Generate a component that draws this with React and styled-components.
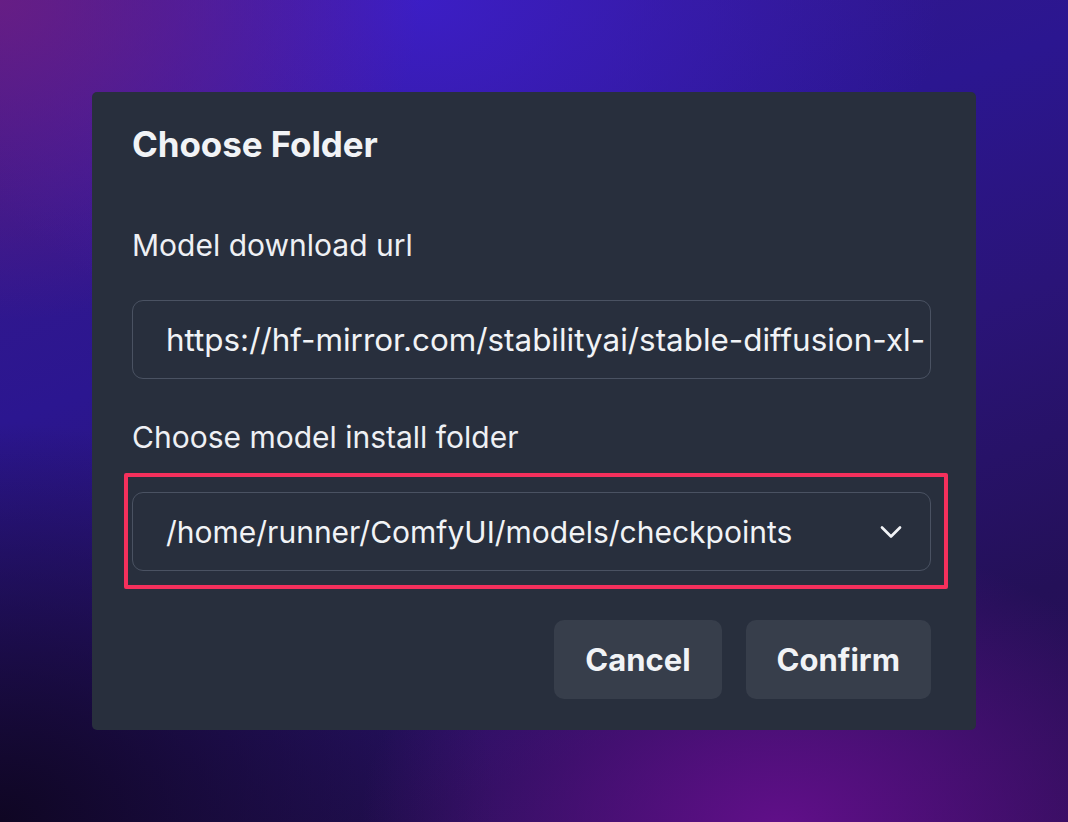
import React from "react";
import styled, { createGlobalStyle } from "styled-components";

const GlobalStyle = createGlobalStyle`
  html, body {
    margin: 0;
    padding: 0;
    width: 1068px;
    height: 822px;
    overflow: hidden;
  }
  body {
    font-family: Inter, "Liberation Sans", sans-serif;
    -webkit-font-smoothing: antialiased;
  }
`;

const Backdrop = styled.div`
  width: 1068px;
  height: 822px;
  box-sizing: border-box;
  padding: 92px 92px;
  background:
    radial-gradient(ellipse 420px 320px at 0px 0px, rgba(110, 30, 130, 0.85), rgba(110, 30, 130, 0) 100%),
    radial-gradient(ellipse 520px 360px at 420px 0px, rgba(60, 30, 200, 0.95), rgba(60, 30, 200, 0) 100%),
    radial-gradient(ellipse 420px 300px at 780px 830px, rgba(100, 15, 140, 0.95), rgba(100, 15, 140, 0) 100%),
    radial-gradient(ellipse 500px 400px at 0px 822px, rgba(15, 6, 35, 1), rgba(15, 6, 35, 0) 100%),
    linear-gradient(160deg, #3a1a8a 0%, #2b1690 35%, #2a1478 55%, #241058 80%, #2a0e55 100%);
`;

const Dialog = styled.div`
  width: 884px;
  height: 638px;
  box-sizing: border-box;
  background: #282f3d;
  border-radius: 5px;
  padding: 22px 45px 31px 40px;
  display: flex;
  flex-direction: column;
  color: #f1f3f6;
`;

const Title = styled.h2`
  margin: 0;
  font-size: 35px;
  font-weight: 700;
  line-height: 60px;
  letter-spacing: -0.1px;
`;

const Label = styled.div`
  font-size: 30px;
  font-weight: 400;
  line-height: 40px;
  margin-top: ${(p) => p.$mt}px;
  color: #eef0f4;
`;

const FieldWrap = styled.div`
  position: relative;
  margin-top: ${(p) => p.$mt}px;
`;

const Field = styled.div`
  height: 79px;
  box-sizing: border-box;
  border: 1.5px solid #4a5262;
  border-radius: 11px;
  padding: 0 21px 0 33px;
  display: flex;
  align-items: center;
  justify-content: space-between;
  font-size: ${(p) => p.$fs}px;
  color: #f1f3f6;
  white-space: nowrap;
  overflow: hidden;
`;

const FieldText = styled.span`
  white-space: nowrap;
`;

const Highlight = styled.div`
  position: absolute;
  top: -19px;
  left: -8px;
  right: -17px;
  bottom: -18px;
  border: 4px solid #f5305c;
  border-radius: 2px;
  pointer-events: none;
`;

const Chevron = styled.svg`
  width: 36px;
  height: 36px;
  flex-shrink: 0;
  margin-left: 16px;
`;

const Actions = styled.div`
  display: flex;
  justify-content: flex-end;
  gap: 24px;
  margin-top: 49px;
`;

const Button = styled.button`
  height: 79px;
  padding: 0 ${(p) => p.$px}px;
  border: none;
  border-radius: 10px;
  background: #373e4b;
  color: #f1f3f6;
  font-family: Inter, "Liberation Sans", sans-serif;
  font-size: 31px;
  font-weight: 700;
  cursor: pointer;
`;

export default function App() {
  return (
    <>
      <GlobalStyle />
      <Backdrop>
        <Dialog>
          <Title>Choose Folder</Title>
          <Label $mt={51}>Model download url</Label>
          <FieldWrap $mt={35}>
            <Field $fs={31.4}>
              <FieldText>https://hf-mirror.com/stabilityai/stable-diffusion-xl-</FieldText>
            </Field>
          </FieldWrap>
          <Label $mt={38}>Choose model install folder</Label>
          <FieldWrap $mt={35}>
            <Field $fs={30}>
              <FieldText>/home/runner/ComfyUI/models/checkpoints</FieldText>
              <Chevron viewBox="0 0 24 24" fill="none" stroke="#f1f3f6" strokeWidth="1.8" strokeLinecap="round" strokeLinejoin="round">
                <polyline points="6 9 12 15 18 9" />
              </Chevron>
            </Field>
            <Highlight />
          </FieldWrap>
          <Actions>
            <Button $px={31}>Cancel</Button>
            <Button $px={31}>Confirm</Button>
          </Actions>
        </Dialog>
      </Backdrop>
    </>
  );
}
